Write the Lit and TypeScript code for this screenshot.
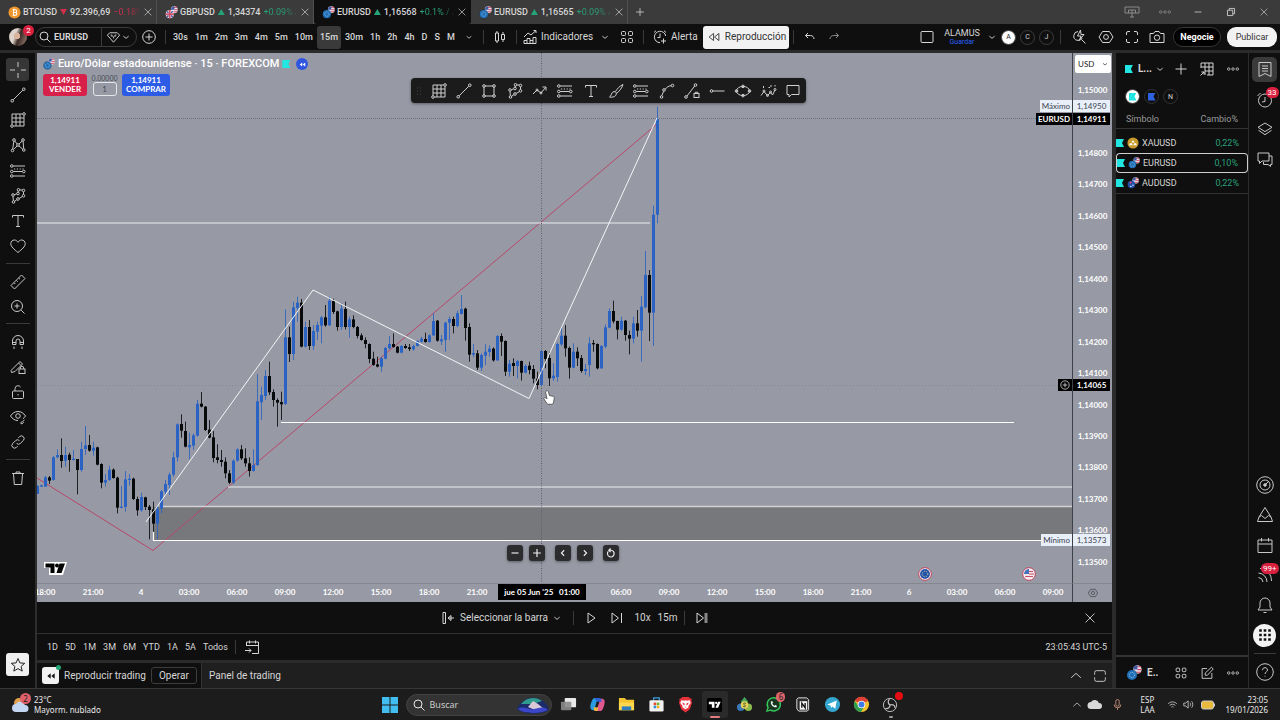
import { LitElement, html, css, svg, nothing } from "lit";
import { customElement } from "lit/decorators.js";
import { classMap } from "lit/directives/class-map.js";

/* ---------- icons, drawn on an 18px grid ---------- */
const dot = (x: number, y: number, r = 1.3) => svg`<circle cx=${x} cy=${y} r=${r} />`;

const icons: Record<string, unknown> = {
  cross: svg`<path d="M9 1v5M9 12v5M1 9h5M12 9h5M9 9h.1"/>`,
  trend: svg`${dot(3.2, 14.8)}${dot(14.8, 3.2)}<path d="M4.2 13.8 13.8 4.2"/>`,
  box: svg`<path d="M3 3h10.6M15 4.4V15H4.4M3 13.6V3M3 7h12M3 11h12M7 3v12M11 3v12"/>${dot(15, 3)}${dot(3, 15)}`,
  pattern: svg`${dot(3.5, 14.5)}${dot(5, 4)}${dot(9, 9)}${dot(14, 4)}${dot(14.8, 14)}<path d="M3.7 13.2 4.8 5.3M5.8 5l2.4 3M10 8l3.2-3M14.1 5.3l.6 7.4M4.5 13.6 8 10M10 10l3.8 3.2"/>`,
  forecast: svg`${dot(2.8, 4)}${dot(2.8, 9.5)}${dot(14.8, 9.5)}${dot(2.8, 14)}<path d="M4.2 4H16M4.2 9.5h9.2M4.2 14H16"/><path d="M5 7h11" stroke-dasharray="1.2 1.6"/>`,
  shapes: svg`${dot(4, 8)}${dot(9, 6.5)}${dot(14.5, 3.5)}${dot(9.5, 2.8)}${dot(14.5, 8.8)}${dot(9, 12)}${dot(4.5, 15)}<path d="M5.3 7.7l2.4-.8M9.200 5.200l.1-1.100M10.800 3h2.400M14.500 4.800v2.700M13.400 9.600 10.200 11.400M7.900 12.700l-2.300 1.500M4 9.300l.4 4.400"/>`,
  text: svg`<path d="M3.500 5.500V3.500h11v2M9 3.500v11M7 14.500h4"/>`,
  heart: svg`<path d="M9 15.500C5 12.300 1.800 9.600 1.800 6.700 1.800 4.500 3.400 3 5.300 3 6.900 3 8.200 3.900 9 5.300 9.800 3.900 11.100 3 12.700 3c1.900 0 3.500 1.500 3.500 3.700C16.200 9.600 13 12.300 9 15.500z"/>`,
  ruler: svg`<path d="M2 12.500 12.500 2 16 5.500 5.500 16zM5 9.700l1.300 1.300M7.300 7.400l1.300 1.300M9.700 5l1.300 1.300"/>`,
  zoom: svg`<circle cx="8" cy="8" r="5.500"/><path d="M12.200 12.200 15.500 15.500M8 5.500v5M5.500 8h5"/>`,
  magnet: svg`<path d="M3.500 11.500V8a5.500 5.500 0 0 1 11 0v3.500h-3.500V8a2 2 0 0 0-4 0v3.500zM3.500 9.500h3.500M11 9.500h3.500M5 13.500v2.500M13 13.500v2.500M7 14h.1M11 14h.1"/>`,
  pencilLock: svg`<path d="M2 12.500 11 3.500l2.500 2.500L6 13.500 2.500 14.500zM9.500 5 12 7.500"/><rect x="10" y="11" width="6" height="4.500"/><path d="M11.300 11v-1a1.700 1.700 0 0 1 3.400 0v1"/>`,
  lock: svg`<rect x="3.500" y="8" width="11" height="7.500" rx="1"/><path d="M6 8V5.500A3 3 0 0 1 11.600 4.200M9 11v1.500"/>`,
  eye: svg`<path d="M1.500 8C3.500 5 6 3.500 9 3.500s5.500 1.500 7.500 4.500c-.8 1.200-1.700 2.200-2.700 2.900M1.500 8c2 3 4.500 4.500 7.500 4.500"/><circle cx="9" cy="8" r="2.300"/><path d="M11 15.500c1-.3 1.300-2 2.700-2l1.800-1.500M12 15.800c1.500 0 2.500-.8 2.500-1.800"/>`,
  link: svg`<path d="M7.600 10.400a2.700 2.700 0 0 0 3.800 0l3.100-3.100a2.700 2.700 0 0 0-3.800-3.800L9.300 4.900M10.400 7.600a2.700 2.700 0 0 0-3.800 0l-3.100 3.100a2.700 2.700 0 0 0 3.800 3.800l1.400-1.400"/>`,
  trash: svg`<path d="M3 4.500h12M7 4.500V3h4v1.500M4.500 4.500l.8 11h7.400l.8-11"/>`,
  star: svg`<path d="M9 2.500l1.900 4.400 4.800.4-3.600 3.100 1.100 4.700L9 12.600l-4.200 2.500 1.100-4.700L2.300 7.300l4.800-.4z"/>`,
  search: svg`<circle cx="8" cy="8" r="4"/><path d="M11 11l3.500 3.500"/>`,
  gem: svg`<path d="M2.500 6.500 5 4h8L15.500 6.500 9 14zM6 6.500h1.500v2M12 6.500h-1.500v2M9 8v2"/>`,
  down: svg`<path d="M6 8 9 10.500 12 8"/>`,
  up: svg`<path d="M3.500 11 9 6 14.500 11"/>`,
  plusCircle: svg`<circle cx="9" cy="9" r="6.300"/><path d="M9 5.500v7M5.500 9h7"/>`,
  plus: svg`<path d="M9 4v10M4 9h10"/>`,
  plusBig: svg`<path d="M9 3.500v11M3.500 9h11"/>`,
  candles: svg`<path d="M6 3v2M6 13v2M4.500 5h3v8h-3zM12 4v2.500M12 11.500V14M10.500 6.500h3v5h-3z"/>`,
  indicators: svg`<path d="M3 15.500v-3h3v-2h3v2h3v-3h3v6zM6 12.500v3M9 12.500v3M12 12.500v3M3 9l4-4 3 2 5-4.500M12.500 2.500H15V5"/>`,
  four: svg`<rect x="3.500" y="3.500" width="4" height="4" rx="1"/><rect x="10.500" y="3.500" width="4" height="4" rx="1"/><rect x="3.500" y="10.500" width="4" height="4" rx="1"/><rect x="10.500" y="10.500" width="4" height="4" rx="1"/>`,
  alarm: svg`<path d="M14.700 8A5.700 5.700 0 1 0 9 14.700M9 5.500V9.500H6.500M3 4.500 5 2.700M15 4.500 13 2.700M12.500 10.500v5M10 13h5"/>`,
  rewind: svg`<path d="M8.500 5v8L3.500 9zM14.500 5v8L9.500 9z"/>`,
  undo: svg`<path d="M7 5 4.500 7.500 7 10M4.500 7.500h5c2 0 3.500 1.500 3.500 3.500"/>`,
  redo: svg`<path d="M11 5l2.500 2.500L11 10M13.500 7.500h-5C6.500 7.500 5 9 5 11"/>`,
  square: svg`<rect x="3" y="3.500" width="12" height="11" rx="1"/>`,
  bolt: svg`<path d="M8 3.500A4.500 4.500 0 1 0 12.300 10M11.500 11.500l4 4M10.500 2 7.500 8H11L9.500 12 14 6.500H11z"/>`,
  hex: svg`<path d="M5.500 3.500h7L16 9l-3.500 5.500h-7L2 9z"/><circle cx="9" cy="9" r="2.400"/>`,
  full: svg`<path d="M3.500 7V5a1.500 1.500 0 0 1 1.500-1.500h2M11 3.500h2A1.500 1.500 0 0 1 14.500 5v2M14.500 11v2a1.500 1.500 0 0 1-1.500 1.500h-2M7 14.500H5A1.500 1.500 0 0 1 3.500 13v-2"/>`,
  maximize: svg`<path d="M3 7.500V5a2 2 0 0 1 2-2h8a2 2 0 0 1 2 2v2.500M15 10.500V13a2 2 0 0 1-2 2H5a2 2 0 0 1-2-2v-2.500"/>`,
  camera: svg`<path d="M2 5.500h3.500L7 3.500h4l1.500 2H16v9H2z"/><circle cx="9" cy="9.700" r="2.700"/>`,
  zig: svg`<path d="M2 12l4-4 4 3 4.500-5.500M11.500 5h3.500v3.500"/>${dot(6, 8, 1)}${dot(10, 11, 1)}`,
  brush: svg`<path d="M2.500 15c2-.500 1.500-5 4.500-5.500 2.300 0 3 2.200 1.800 3.800C7.800 15 5 15.500 2.500 15zM8.500 9.500c1.500-2.500 4-5.500 7.500-7-1 3.500-3.500 6.500-6 8.500"/>`,
  rect: svg`<path d="M4.800 4h8.400M14 5v8.200M13.200 14H4.800M4 13.200V5"/>${dot(4, 4)}${dot(14, 4)}${dot(4, 14)}${dot(14, 14)}`,
  curve: svg`${dot(3.5, 15)}${dot(14.5, 3.5)}${dot(6, 8)}<path d="M3.800 13.700 5.600 9.300M7.200 7.300C8.500 5 11 4 13.200 3.600"/>`,
  lineBox: svg`${dot(3, 15)}${dot(12.5, 3)}<path d="M4 14 11.700 4"/><rect x="11" y="11.500" width="5" height="4"/><path d="M12.300 11.500v-1.300h2.400v1.300"/>`,
  hline: svg`${dot(3.5, 9)}<path d="M5 9h11.500"/>`,
  ellipse: svg`<ellipse cx="9" cy="9" rx="6.500" ry="4.600"/>${dot(2.5, 9)}${dot(15.5, 9)}${dot(9, 4.4)}${dot(9, 13.6)}`,
  elliott: svg`<path d="M2 13.500l3-4 3.500 4 3-3 2 2.500 2.500-5"/>${dot(5, 9, 1)}${dot(8.5, 13.5, 1)}${dot(11.5, 10, 1)}${dot(16, 7.5, 1)}<path d="M4.500 4v2M9.500 5.500h1.500M12 3v2M16 3v1.500"/>`,
  comment: svg`<path d="M3 3.500h12v9H7.500L5 15v-2.500H3z"/>`,
  grip: svg`<path stroke-linecap="round" d="M7 5h.1M11 5h.1M7 9h.1M11 9h.1M7 13h.1M11 13h.1"/>`,
  dots: svg`${dot(3.5, 9, 1.6)}${dot(9, 9, 1.6)}${dot(14.5, 9, 1.6)}`,
  table: svg`<path d="M3 8V3h12v12H9M3 7h12M7 3v12M11 3v12M7 11h8M2.500 15.500 6 12M3.500 12H6v2.500"/>`,
  list: svg`<path d="M3 2.500h12v14l-6-3-6 3zM6 6h6M6 8.500h6M6 11h6"/>`,
  clock: svg`<circle cx="9" cy="10.500" r="6.500"/><path d="M9 7V11.500l-3 .5M1.500 6 4.500 3"/>`,
  layers: svg`<path d="M9 3l7 4.300-7 4.300-7-4.300zM2.500 10.300 9 14.700l6.500-4.400"/>`,
  chat: svg`<path d="M2 3h11v8H6l-2.500 2.500V11H2zM13 6h3v8.500h-1.500v2L12 14.500H7.500V12"/>`,
  radar: svg`<circle cx="9" cy="9" r="8.300"/><circle cx="9" cy="9" r="5"/><circle cx="9" cy="9" r="1.300" fill="currentColor"/><path d="M9 9l4-4"/>`,
  pyramid: svg`<path d="M9 1.500 15 11 12.500 9.500 9 12.500 5.500 9.500 3 11zM3 11l-1.500 4.500h15L15 11"/>`,
  calendar: svg`<path d="M2 4h14v12.500H2zM2 8h14M5.500 2v3.500M12.500 2v3.500"/>`,
  feed: svg`<path d="M2.500 7a9 9 0 0 1 8.500 9M2.500 11.500a5 5 0 0 1 4.500 4.500M4 2.500C11 3 15.500 8 15.500 15M3 15.500h.1"/>`,
  bell: svg`<path d="M9 2a5 5 0 0 1 5 5v4l2 3H2l2-3V7a5 5 0 0 1 5-5zM7.500 16.500h3"/>`,
  apps: svg`<path stroke-width="2.600" d="M3.200 4.500h2.600M7.700 4.500h2.600M12.200 4.500h2.600M3.200 9h2.600M7.700 9h2.600M12.200 9h2.600M3.200 13.500h2.600M7.700 13.500h2.600M12.200 13.500h2.600"/>`,
  help: svg`<circle cx="9" cy="9" r="8.300"/><path d="M6.500 7.200C6.500 5.500 7.500 4.700 9 4.700s2.500 1 2.500 2.300C11.500 8.800 9 9 9 11M9 12.800v.8"/>`,
  selectBar: svg`<path d="M4 3.500h2.500v11H4zM15 9H9.500M12 6.500v5L9 9z"/>`,
  play: svg`<path d="M6 4v10l7-5z"/>`,
  step: svg`<path d="M4 4v10l6.500-5zM13.500 4v10"/>`,
  toEnd: svg`<path d="M4 4v10l6.500-5z"/><path stroke-width="3" opacity=".6" d="M13 4v10"/>`,
  close: svg`<path d="M4 4l10 10M14 4 4 14"/>`,
  goTo: svg`<path d="M3.500 8V4h12v11.500H9M3.500 7.500h12M6.500 2.500v3M12.500 2.500v3M2 12.500h6M6 10.500l2 2-2 2"/>`,
  edit: svg`<path d="M14.500 9v6h-11V4H9M7 11.500V9L14 2.500 16 4.500 9.500 11.500z"/>`,
  minus: svg`<path d="M4.500 9h9"/>`,
  left: svg`<path d="M10.500 5.500 7 9l3.500 3.500"/>`,
  right: svg`<path d="M7.500 5.500 11 9l-3.500 3.500"/>`,
  reset: svg`<path d="M5.500 7A4.300 4.300 0 1 0 9 5.500H6.500M8.500 3.200 6.200 5.500l2.300 2.300"/>`,
  monitor: svg`<path d="M2 4h14v6H2zM5.500 10V7h7v3M9 7v7M7 14h4"/>`,
  restore: svg`<path d="M5 7h6v6H5zM7 7V5h6v6h-2"/>`,
  mic: svg`<path d="M9 3a2 2 0 0 1 2 2v4a2 2 0 0 1-4 0V5a2 2 0 0 1 2-2zM5 9a4 4 0 0 0 8 0M9 13v2.500"/>`,
  wifi: svg`<path d="M3 8c3.500-3.500 8.500-3.500 12 0M5 10.300c2.500-2.300 5.500-2.300 8 0M7.500 12.500c1-.8 2-.8 3 0"/>`,
  speaker: svg`<path d="M2.500 7H5l3.500-3v10L5 11H2.500zM11 6.500c1.200 1.500 1.200 3.500 0 5M13.300 4.500c2.200 2.500 2.200 6.500 0 9"/>`,
};

const icon = (name: string, size = 18) =>
  html`<svg class="ic" width=${size} height=${size} viewBox="0 0 18 18" aria-hidden="true">${icons[name]}</svg>`;

/* ---------- instrument logos ---------- */
const usFlag = svg`<circle cx="10" cy="4" r="3.700" fill="#e9e4ec"/><path d="M9 1.500h4M10 4h3.700M9 6.300h4" stroke="#d0405a"/><path d="M6.500 3a3.700 3.700 0 0 1 3.500-2.700V4H6.500z" fill="#3b57a8"/>`;
const coins: Record<string, unknown> = {
  BTC: svg`<circle cx="7" cy="7" r="6.500" fill="#f0962c"/><path d="M5 4h3a1.400 1.400 0 0 1 0 2.900H5.500M8 6.900a1.500 1.500 0 0 1 0 3.100H5M6 4v6M6.500 3v1M6.500 10v1" stroke="#fff" fill="none" stroke-width="1.100"/>`,
  XAU: svg`<circle cx="7" cy="7" r="6.500" fill="#c99a2c"/><path d="M5.300 6.300l.8-2h1.800l.8 2zM2.500 9.600l.9-2.300h2.400l.8 2.300zM7.400 9.600l.8-2.300h2.400l.9 2.300z" fill="#fff"/>`,
  EUR: svg`${usFlag}<circle cx="5.200" cy="8.800" r="5" fill="#0f0f0f" opacity=".35"/><circle cx="5.200" cy="8.800" r="4.400" fill="#1f6fb8"/><circle cx="5.200" cy="8.800" r="2.300" fill="none" stroke="#a8cbe0" stroke-width=".8" stroke-dasharray="1 .8"/>`,
  GBP: svg`${usFlag}<circle cx="5.200" cy="8.800" r="4.400" fill="#e8c9d4"/><path d="M5.200 4.400v8.800M.8 8.800h8.800" stroke="#cf3551" stroke-width="1.300"/><path d="M2.200 5.800l1.500 1.500M8.200 5.800 6.700 7.300M2.200 11.800l1.500-1.500M8.200 11.800 6.700 10.300" stroke="#3455a5" stroke-width="1.400"/>`,
  AUD: svg`${usFlag}<circle cx="5.200" cy="8.800" r="4.400" fill="#2450a8"/><path d="M3 6.500h2.500M4.200 5.300v2.500" stroke="#e46"/><circle cx="7" cy="9.500" r=".8" fill="#fff"/><circle cx="4.500" cy="11" r=".8" fill="#fff"/>`,
};
const coin = (name: string, size = 13) =>
  html`<svg class="coin" width=${size} height=${size} viewBox="0 0 14 14" aria-hidden="true">${coins[name]}</svg>`;

/* ---------- chart series: side, body top, body bottom, high, low (thirds of a pixel) ---------- */
const series: { base: number; rows: string }[] = [
  {
    base: 370,
    rows: `b348 372 345 372,b346 350 344 350,b322 350 318 350,k322 332 318 342,b262 330 258 332,b255 262 238 265,k255 273 205 293,b255 272 230 290,k254 270 248 305,b266 270 240 272,k267 300 267 373,b237 300 215 305,b226 237 168 255,k225 242 195 245,b233 242 215 257,k232 284 230 286,k282 338 280 355,b330 338 312 350,b299 330 287 333,k299 324 295 326,k323 413 320 430,b410 413 348 415,b328 411 303 425,b326 330 312 347,k326 387 323 390,k387 421 380 437,b381 421 368 425,k382 411 380 420,k410 420 405 508,k418 461 395 485,b416 461 408 508,b364 416 360 430,b342 365 330 375,b314 345 308 375,b262 314 245 320,b163 262 160 275,k162 182 133 203,k183 230 155 232,b225 232 188 268,b196 227 190 240,b101 197 90 200,k101 110 66 112,k110 180 108 183,k179 203 150 205,k202 264 183 277,k262 270 223 280,k270 276 240 290,k275 310 262 325,k310 338 300 342,b272 338 268 342,b238 272 235 275,k238 265 225 270,k265 280 235 290,k280 303 262 320,b285 303 238 305,b94 285 12 288,b75 97 50 150,b18 78 0 90,k18 67 -25 75,k66 90 58 110,k90 98 85 170,k96 103 65 150`,
  },
  {
    base: 270,
    rows: `b202 402 118 405,k202 252 170 276,b112 252 95 270,b98 114 80 155,k98 230 87 232,b171 230 155 233,k171 228 150 240,b183 228 165 240,b165 185 155 210,b142 167 138 220,k142 166 105 170,b92 166 80 168,k93 126 86 132,k124 171 122 182,b116 171 100 180,k117 171 95 178,b148 171 140 203,k148 171 136 175,k171 198 168 205,k196 210 190 212,k210 222 202 235,k222 267 220 280,k266 285 245 287,k283 290 260 292,b265 290 260 305,b234 266 230 268,b222 235 198 238,k222 231 190 233,k230 248 228 250,b228 248 225 250,k228 234 222 236,k232 237 222 243,b228 238 224 242,b213 228 210 230,b206 215 200 217,k207 216 188 218,b196 216 193 218,b153 196 130 198,k152 212 150 215,b208 214 195 225,b158 210 155 245,b147 158 140 210,k147 168 140 190,b130 168 122 172,b117 132 75 133,k116 174 113 212,k171 254 160 275,b249 254 222 262,k250 293 240 300,b255 293 250 303,b245 257 222 285,b236 246 226 260,k236 271 232 275,b198 271 195 273,k198 215 190 258,k213 305 211 318,b281 305 270 320,k279 288 265 318,b273 288 270 325,k273 308 272 332,b288 308 283 310`,
  },
  {
    base: 90,
    rows: `k827 840 815 853,k837 866 825 880,k866 885 845 898,b783 885 780 888,k783 807 780 835,k804 865 785 888,b857 865 820 873,b762 861 758 875,b737 763 712 768,k737 775 705 800,k774 833 770 866,b785 833 760 835,k785 805 772 828,k804 843 795 848,b837 843 822 855,b760 825 742 860,k759 763 750 785,k762 835 760 838,b768 835 765 837,b712 770 703 775,b663 713 655 715,k663 694 632 700,k693 719 692 748,b692 719 680 722,k692 735 690 752,k735 746 722 793,b700 746 680 760,k700 722 660 740,b650 722 618 815,b555 652 483 655,k555 668 540 753,b374 668 347 768,b87 374 50 400`,
  },
];
const HEADER = 53;
const candles = series
  .flatMap((s) =>
    s.rows.split(",").map((row) => {
      const [t, b, h, l] = row.slice(1).split(" ").map((v) => +v / 3 + s.base - HEADER);
      return { up: row[0] === "b", t, b, h, l };
    }),
  )
  .map((c, i) => ({ ...c, x: i * 4 }));

const prices = ["1,15000", "", "1,14800", "1,14700", "1,14600", "1,14500", "1,14400", "1,14300", "1,14200", "1,14100", "1,14000", "1,13900", "1,13800", "1,13700", "1,13600", "1,13500"];
const times = ["18:00", "21:00", "4", "03:00", "06:00", "09:00", "12:00", "15:00", "18:00", "21:00", "", "", "06:00", "09:00", "12:00", "15:00", "18:00", "21:00", "6", "03:00", "06:00", "09:00"];
const intervals = ["30s", "1m", "2m", "3m", "4m", "5m", "10m", "15m", "30m", "1h", "2h", "4h", "D", "S", "M"];

const tabs = [
  { coin: "BTC", name: "BTCUSD", up: false, price: "92.396,69", change: "−0.18%", active: false },
  { coin: "GBP", name: "GBPUSD", up: true, price: "1,34374", change: "+0.09% /", active: false },
  { coin: "EUR", name: "EURUSD", up: true, price: "1,16568", change: "+0.1% / A", active: true },
  { coin: "EUR", name: "EURUSD", up: true, price: "1,16565", change: "+0.09% /", active: false },
];

const apps: { name: string; art: unknown; on?: boolean; badge?: string }[] = [
  { name: "Vista de tareas", art: svg`<rect x="5" y="2" width="12" height="10" rx="1" fill="#e8e8e8"/><rect x="1" y="6" width="11" height="9" rx="1" fill="#8b8b8b" opacity=".9"/>` },
  { name: "Copilot", art: svg`<path d="M6 2h5l-3.500 13H4.500C1 15 1 11 2 8S4 2 6 2z" fill="#2a9be0"/><path d="M12 3h2c3 0 3 4 2 7s-2 6-4 6H7z" fill="#e0588e"/><path d="M6 2h5c2 0 2 2 2.500 4H8z" fill="#2f62d8"/><path d="M5 12h5l-1 4H7c-2 0-2-2-2-4z" fill="#f2b63c"/><path d="M8 6h3l-2 6H6.500z" fill="#1c1c1c"/>` },
  { name: "Explorador", art: svg`<path d="M1 2h6l2 2h8v11H1z" fill="#f4c430"/><path d="M1 7h16v8H1z" fill="#ffd84f"/><path d="M4 11h10v4H4z" fill="#2f7fc0"/>` },
  { name: "Tienda", art: svg`<path d="M6 5V2h6v3" fill="none" stroke="#3b9ee0" stroke-width="1.300"/><rect x="1.500" y="4.500" width="15" height="12" rx="1.500" fill="#f1f1f1"/><path d="M6 7h2.700v2.700H6z" fill="#e5472d"/><path d="M9.300 7H12v2.700H9.300z" fill="#70b52c"/><path d="M6 10.300h2.700V13H6z" fill="#2a93dd"/><path d="M9.300 10.300H12V13H9.300z" fill="#f4b51e"/>` },
  { name: "Brave", art: svg`<path d="M5.500 1h7l1 1.500 2 .5-.2 2.500.7 1.500-2.500 7L9 17.500 4.500 14 2 7l.7-1.500L2.500 3l2-.5z" fill="#e8323c"/><path d="M4.500 4.500l3 .5L9 4.500l1.500.5 3-.5 1 3-2.500 3 .3 1.500L9 14l-3.300-2L6 10.500l-2.500-3z" fill="#fff"/><path d="M5.500 7l2.500 1v2L6.500 9zM12.500 7 10 8v2l1.500-1zM8 11.500h2L9 12.500z" fill="#e8323c"/>` },
  { name: "TradingView", on: true, art: svg`<rect x="1" y="2" width="16" height="15" rx="2" fill="#000"/><path d="M3 6h6v6.500H6.200V8.700H3zM12.800 6H15.500l-2.700 6.500H10z" fill="#fff"/><circle cx="10.800" cy="7.300" r="1.200" fill="#fff"/>` },
  { name: "Finanzas", art: svg`<path d="M9 1l4 5-4 4-4-4z" fill="#4aa85c"/><circle cx="5" cy="12" r="4" fill="#3a77b8"/><circle cx="13" cy="12" r="4" fill="#8dba4d"/><circle cx="9" cy="9.500" r="4" fill="#e7cf58"/><path d="M10.500 8c-2.500-1.500-3.500.8-1.500 1.500s1 2.800-1.500 1.500" stroke="#3d5e30" fill="none"/>` },
  { name: "WhatsApp", badge: "6", art: svg`<path d="M2 16l1.200-3.700A7 7 0 1 1 6 15z" fill="#17351f" stroke="#35c759" stroke-width="1.500"/><path d="M6.300 5.500c-1 3.500 3 7.500 6 6.300l.3-1.600-1.700-.8-1 .8c-1-.4-1.800-1.200-2.200-2.200l.8-.8-.7-1.700z" fill="#e8f5ea"/>` },
  { name: "Notion", art: svg`<path d="M3 3.500 4.500 2h9l2 2v10.500L14 16H5l-2-2.500z" fill="#2b2b2b" stroke="#e8e8e8"/><path d="M6 5.500h8v9H6z" fill="#f4f4f4"/><path d="M8.300 12.500v-5l3.500 5v-5" stroke="#111" stroke-width="1.400" fill="none"/>` },
  { name: "Telegram", art: svg`<circle cx="9" cy="9" r="8" fill="#35a6cf"/><path d="M3.500 9 13.500 4.800 12 13.500 8.800 11.200 7.300 12.700 7 10z" fill="#fff"/>` },
  { name: "Chrome", art: svg`<circle cx="9" cy="9" r="8" fill="#f5c22e"/><path d="M9 9 2 5a8 8 0 0 1 14 0z" fill="#de4236"/><path d="M1.900 5.200A8 8 0 0 0 8.500 17L12 11 5.500 10z" fill="#2f9e4e"/><circle cx="9" cy="9" r="4" fill="#fff"/><circle cx="9" cy="9" r="3.100" fill="#3f7be6"/>` },
  { name: "OBS", badge: " ", art: svg`<circle cx="8.500" cy="9.500" r="7" fill="#1c1c1c" stroke="#c4c4c4"/><path d="M8.500 9.500C6 8 6 5 8 3.500M8.500 9.500c2.700-1.300 5 .5 5.500 3M8.500 9.500c0 3-2.500 4.500-5 3.500" stroke="#c4c4c4" fill="none" stroke-width="1.300"/>` },
];

@customElement("app-root")
export class AppRoot extends LitElement {
  static styles = css`
    :host { display: flex; flex-direction: column; min-height: 100vh; overflow: hidden; background: #0f0f0f; color: #d6d6d6; font: 400 10px/12px Roboto, "Noto Sans", sans-serif; }
    * { box-sizing: border-box; }
    button, input, select { font: inherit; color: inherit; border: 0; background: none; padding: 0; margin: 0; }
    button { display: flex; align-items: center; justify-content: center; white-space: nowrap; }
    b { font-weight: 500; }
    .ic { fill: none; stroke: currentColor; flex: none; display: block; }
    .coin { flex: none; display: block; }
    .sep { width: 1px; height: 14px; background: #3a3a3a; margin: 0 4px; flex: none; }
    .grow { flex: 1; }
    .w14 { width: 14px; }
    .w20 { width: 20px; }
    .w24 { width: 24px; }
    .w26 { width: 26px; }
    .w28 { width: 28px; }

    .tabs { display: flex; height: 24px; background: #3b3b3b; align-items: stretch; }
    .tab { width: 157px; display: flex; align-items: center; gap: 3px; padding: 0 2px 0 8px; border-right: 1px solid #505050; white-space: nowrap; font-size: 9px; }
    .tab.active { background: #0f0f0f; border-color: #0f0f0f; border-radius: 0 0 3px 3px; }
    .tab .coin { margin-right: -1px; }
    .tab .change { flex: 1; min-width: 0; color: #2a9d78; mask-image: linear-gradient(90deg, #000 60%, #0004); }
    .tab .change.red { color: #c22f4b; }
    .tri { width: 7px; height: 6px; flex: none; background: #24a37b; clip-path: polygon(50% 0, 100% 100%, 0 100%); }
    .tri.red { background: #d0304c; clip-path: polygon(0 0, 100% 0, 50% 100%); }
    .win { width: 33px; color: #cfcfcf; }
    .dim { color: #8b8b8b; }

    .top { display: flex; align-items: center; height: 29px; border-bottom: 3px solid #2b2b2b; }
    .avatar { width: 35px; position: relative; display: flex; justify-content: center; }
    .face { width: 18px; height: 18px; border-radius: 50%; background: radial-gradient(circle at 45% 45%, #d9b39b 0 22%, transparent 24%), linear-gradient(110deg, #dcd3ca 35%, #3b2a25 55%, #a08577); }
    .badge { position: absolute; background: #d9203f; color: #fff; border-radius: 6px; font-size: 8px; line-height: 11px; min-width: 11px; text-align: center; }
    .avatar .badge { right: 1px; top: -3px; }
    .pill { width: 102px; height: 20px; border: 1px solid #3c3c3c; border-radius: 10px; display: flex; align-items: center; }
    .pill .sym { width: 66px; height: 18px; border-right: 1px solid #3c3c3c; justify-content: flex-start; font-size: 9px; font-weight: 700; }
    .pill .cmp { flex: 1; }
    .pill .cmp .ic + .ic { margin-left: -4px; }
    .intervals { width: 309px; display: flex; justify-content: space-between; align-items: center; font-size: 9px; font-weight: 500; }
    .intervals button { height: 23px; padding: 0 3px; border-radius: 3px; }
    .intervals button.on { background: #3a3a3a; }
    .ind { width: 74px; gap: 2px; justify-content: flex-start; }
    .alert { width: 53px; gap: 2px; justify-content: flex-start; padding-left: 3px; }
    .replay { width: 86px; height: 23px; margin: 0 0 0 2px; background: #f2f2f2; color: #333; border-radius: 3px; gap: 3px; }
    .layout { width: 46px; flex-direction: column; font-size: 9px; line-height: 10px; }
    .layout span { color: #2962ff; font-size: 7px; line-height: 8px; }
    .ring { width: 15px; height: 15px; border-radius: 50%; border: 1px solid #3c3c3c; font-size: 7px; margin: 0 2px; }
    .ring.on { background: #fff; color: #222; }
    .deal { width: 48px; height: 20px; border-radius: 10px; border: 1px solid #363636; background: #000; color: #fff; font-weight: 700; font-size: 9px; margin: 0 6px 0 4px; }
    .publish { width: 50px; height: 20px; border-radius: 9px; background: #f2f2f2; color: #333; font-size: 9px; margin-right: 3px; }

    .main { flex: 1; display: flex; min-height: 0; }
    .tools { width: 37px; border-right: 2px solid #2e2e2e; padding-top: 4px; display: flex; flex-direction: column; color: #c8c8c8; }
    .group { display: grid; grid-auto-rows: 1fr; justify-items: center; align-items: center; }
    .group.a { height: 202px; } .group.b { height: 50px; } .group.c { height: 126px; } .group.d { height: 25px; }
    .group button { width: 23px; height: 23px; border-radius: 3px; }
    .group button.on { background: #363636; }
    .tools hr { width: 24px; height: 1px; border: 0; background: #3a3a3a; margin: 4px auto 5px; }
    .fav { width: 23px; height: 23px; border-radius: 3px; background: #f0f0f0; color: #222; margin: auto 6px 12px; }

    .center { flex: 1; min-width: 0; display: flex; flex-direction: column; border-right: 4px solid #2b2b2b; }
    .chart { display: grid; grid-template-columns: 1fr 40px; grid-template-rows: 530px 19px; background: #979aa4; color: #fff; font: 700 8px/12px Lato, "Noto Sans", sans-serif; }
    .pane { position: relative; overflow: hidden; min-width: 0; }
    .plot { position: absolute; inset: 0; width: 100%; height: 100%; }
    .legend { position: relative; display: flex; align-items: center; gap: 3px; padding: 4px 6px 0; font: 500 11px/14px Roboto, "Noto Sans", sans-serif; }
    .flag { width: 8px; height: 8px; background: #22e6e2; clip-path: polygon(0 0, 100% 0, 75% 50%, 100% 100%, 0 100%); margin: 0 5px 0 4px; }
    .legend .flag { margin: 0 3px 0 0; }
    .back { width: 12px; height: 12px; border-radius: 50%; background: #2f55e0; }
    .back .ic, .rt .ic { fill: currentColor; stroke: none; }
    .trade { position: relative; display: flex; align-items: flex-end; gap: 5px; padding: 3px 6px; }
    .trade button { flex-direction: column; width: 44px; height: 22px; border-radius: 3px; line-height: 9px; background: #d8214a; color: #fff; }
    .trade button.buy { width: 48px; background: #2c5be6; }
    .spread { display: flex; flex-direction: column; align-items: center; width: 25px; color: #484b54; font-size: 7px; line-height: 8px; font-weight: 400; }
    .spread input { width: 24px; height: 14px; border: 1px solid #e4e5e8; border-radius: 3px; text-align: center; font-size: 8px; }
    .drawbar { position: absolute; left: 374px; top: 25px; width: 395px; height: 25px; border-radius: 4px; background: #1b1b1b; color: #d0d0d0; box-shadow: 0 1px 3px #0006; display: grid; grid-template-columns: 15px repeat(15, 1fr); justify-items: center; align-items: center; }
    .drawbar .grip { color: #555; }
    .nav { position: absolute; left: 0; right: 0; bottom: 22px; padding-left: 16px; display: flex; gap: 6px; justify-content: center; }
    .nav button { width: 16px; height: 16px; border-radius: 3px; background: #2c2c2e; color: #eee; box-shadow: 0 1px 3px #0006; }
    .nav .ic { stroke-width: 1.500; }
    .nav .gap { margin-right: 4px; }
    .axis { position: relative; border-left: 1px solid #3f4148; }
    .scale { position: absolute; top: 31px; left: 0; right: 0; height: 484px; display: flex; flex-direction: column; justify-content: space-between; text-align: center; }
    .scale span { height: 12px; }
    .cur { position: absolute; z-index: 1; top: 2px; left: 2px; width: 36px; }
    .cur select { appearance: none; width: 36px; height: 18px; background: #fff; color: #222; border-radius: 2px; padding-left: 3px; font-weight: 400; }
    .cur .ic { position: absolute; right: 0; top: 3px; color: #222; }
    .mark { position: absolute; right: 2px; height: 12px; display: flex; }
    .mark span { background: #e9eff9; color: #3b4250; font-weight: 400; padding: 0 2px; }
    .mark span + span { width: 38px; text-align: center; padding: 0; border-left: 1px solid #3f4148; }
    .mark.dark span { background: #000; color: #fff; font-weight: 700; }
    .mark.cursor span:first-child { padding: 0 1px; }
    .max { top: 47px; } .now { top: 60px; } .cursor { top: 326px; } .min { top: 481px; }
    .time { position: relative; border-top: 1px solid #85878f; overflow: hidden; }
    .ticks { display: grid; grid-template-columns: repeat(22, 48px); margin-left: -16px; text-align: center; line-height: 17px; }
    .stamp { position: absolute; left: 461px; top: 0; width: 88px; height: 16px; background: #000; text-align: center; line-height: 17px; white-space: pre; }
    .corner { border-left: 1px solid #3f4148; border-top: 1px solid #85878f; color: #3a3c42; }

    .replaybar { height: 32px; display: flex; align-items: center; border-bottom: 1px solid #303030; padding: 0 14px 0 402px; }
    .replaybar .select { gap: 3px; width: 106px; justify-content: flex-start; }
    .replaybar .steps { display: flex; }
    .replaybar .speed { width: 25px; }
    .ranges { height: 29px; display: flex; align-items: center; padding: 0 5px 0 10px; border-bottom: 3px solid #2b2b2b; font-size: 9px; }
    .ranges .list { width: 181px; display: flex; justify-content: space-between; margin-right: 3px; }
    .panel { height: 25px; display: flex; align-items: center; background: #1f1f1f; }
    .rt { width: 165px; height: 25px; background: #0f0f0f; border-right: 1px solid #333; display: flex; align-items: center; padding-left: 5px; gap: 5px; white-space: nowrap; }
    .rt .logo { width: 17px; height: 17px; border-radius: 3px; background: #f2f2f2; color: #111; position: relative; display: flex; align-items: center; justify-content: center; }
    .rt .logo i { position: absolute; right: -2px; top: -2px; width: 5px; height: 5px; border-radius: 50%; background: #23a576; }
    .rt .operate { border: 1px solid #3c3c3c; border-radius: 3px; width: 46px; height: 17px; }
    .panel .trading { margin-left: 7px; }

    .watch { width: 133px; display: flex; flex-direction: column; border-right: 1px solid #2c2c2c; }
    .whead { display: flex; align-items: center; height: 32px; padding-left: 5px; }
    .whead .name { width: 47px; justify-content: flex-start; font-weight: 700; }
    .flags { display: flex; gap: 4px; padding: 4px 9px; }
    .flags button { width: 15px; height: 15px; border: 1px solid #333; border-radius: 50%; font-size: 7px; }
    .flags .flag { margin: 0; }
    .flags .blue { background: #2f62e0; }
    .flags .on { background: #fff; }
    table { width: 100%; border-collapse: separate; border-spacing: 0; margin-top: 2px; border-bottom: 1px solid #333; font-size: 9px; }
    th { font-weight: 400; color: #9a9a9a; text-align: left; height: 19px; padding: 0 0 0 10px; border-bottom: 1px solid #333; }
    th + th { text-align: right; padding: 0 10px 0 0; }
    td { height: 20px; padding: 0; }
    tbody tr:nth-child(1) td { height: 24px; padding-top: 4px; }
    td + td { text-align: right; padding-right: 9px; color: #2aa079; }
    .s { display: flex; align-items: center; gap: 3px; }
    .s .flag { margin: 0; }
    .sel td { border: 1px solid #cfcfcf; border-width: 1px 0; }
    .sel td:first-child { border-left-width: 1px; border-radius: 4px 0 0 4px; }
    .sel td:last-child { border-right-width: 1px; border-radius: 0 4px 4px 0; }
    .wfoot { margin-top: auto; height: 33px; border-top: 2px solid #333; display: flex; align-items: center; padding-left: 10px; }
    .wfoot .name { width: 42px; gap: 5px; justify-content: flex-start; font-weight: 700; }

    .rail { width: 31px; display: flex; flex-direction: column; align-items: center; padding: 1px 0; color: #c8c8c8; }
    .rail button { height: 30px; width: 30px; position: relative; }
    .rail .in { width: 25px; height: 25px; border-radius: 5px; display: flex; align-items: center; justify-content: center; }
    .rail .in.on { background: #3a3a3a; }
    .rail .in.white { width: 23px; height: 23px; border-radius: 50%; background: #f3f3f3; color: #111; }
    .rail .badge { right: 1px; top: 3px; padding: 0 2px; }
    .rail hr { width: 22px; height: 1px; border: 0; background: #3a3a3a; margin: 3px 0; }

    .taskbar { height: 32px; border-top: 1px solid #383838; background: #1c1c1c; color: #e8e8e8; display: grid; grid-template-columns: 1fr auto 1fr; align-items: center; font: 400 8px/10px "Noto Sans", "Open Sans", sans-serif; }
    .weather { display: flex; align-items: center; gap: 4px; padding-left: 11px; position: relative; }
    .weather .badge { left: 20px; top: -2px; background: #e0606a; color: #222; }
    .mid { display: flex; align-items: center; }
    .start { width: 31px; }
    .find { width: 146px; height: 22px; border-radius: 11px; background: #333; border: 1px solid #424242; display: flex; align-items: center; padding: 0 1px 0 3px; margin-right: 2px; }
    .find input { flex: 1; min-width: 0; font-size: 9px; outline: 0; margin-left: 2px; }
    .find input::placeholder { color: #ccc; opacity: 1; }
    .apps { width: 352px; display: grid; grid-template-columns: repeat(12, 1fr); justify-items: center; }
    .apps button { width: 26px; height: 27px; position: relative; border-radius: 3px; }
    .apps .on { background: #2a2a2a; }
    .apps .on::after { content: ""; position: absolute; bottom: 0; width: 10px; height: 2px; border-radius: 1px; background: #e27c80; }
    .apps .run::after { content: ""; position: absolute; bottom: 0; width: 4px; height: 2px; border-radius: 1px; background: #9a9a9a; }
    .apps .badge { right: 1px; top: 1px; min-width: 9px; height: 10px; line-height: 10px; background: #e0646a; color: #222; }
    .apps .badge.rec { background: #e40d12; min-width: 8px; height: 8px; }
    .tray { display: flex; align-items: center; justify-content: flex-end; padding-right: 12px; gap: 3px; }
    .tray .lang { text-align: center; width: 22px; margin: 0 5px 0 8px; }
    .tray .date { text-align: right; margin-left: 6px; }
    .tray .mic { color: #d69a84; margin-left: 3px; }
    .tray .battery { margin-left: 3px; }
  `;

  private btn(name: string, label = name, cls = "w24", size = 18) {
    return html`<button class=${cls} aria-label=${label}>${icon(name, size)}</button>`;
  }

  private tabBar() {
    return html`<nav class="tabs">
      ${tabs.map(
        (t) => html`<div class=${classMap({ tab: true, active: t.active })}>
          ${coin(t.coin)}<b>${t.name}</b><span class=${classMap({ tri: true, red: !t.up })}></span><b>${t.price}</b>
          <span class=${classMap({ change: true, red: !t.up })}>${t.change}</span>${this.btn("close", "Cerrar", "", 12)}
        </div>`,
      )}
      ${this.btn("plus", "Nueva pestaña", "w24", 14)}<span class="grow"></span>
      <button class="win dim" aria-label="Pantallas">${icon("monitor")}</button>
      <button class="win dim" aria-label="Más">${icon("dots", 14)}</button>
      ${this.btn("minus", "Minimizar", "win", 14)}${this.btn("restore", "Restaurar", "win", 16)}${this.btn("close", "Cerrar", "win", 12)}
    </nav>`;
  }

  private topBar() {
    return html`<header class="top">
      <div class="avatar"><span class="face"></span><span class="badge">2</span></div>
      <div class="pill">
        <button class="sym">${icon("search")}EURUSD</button>
        <button class="cmp" aria-label="Tipo">${icon("gem", 17)}${icon("down", 16)}</button>
      </div>
      ${this.btn("plusCircle", "Comparar")}<span class="sep"></span>
      <div class="intervals">
        ${intervals.map((i) => html`<button class=${i === "15m" ? "on" : ""}>${i}</button>`)}
        <button aria-label="Más intervalos">${icon("down", 14)}</button>
      </div>
      <span class="sep"></span>${this.btn("candles", "Velas")}<span class="sep"></span>
      <button class="ind">${icon("indicators")}Indicadores</button>${this.btn("down", "Plantillas", "w20", 16)}
      ${this.btn("four", "Diseños", "w24")}<span class="sep"></span>
      <button class="alert">${icon("alarm")}Alerta</button>
      <button class="replay">${icon("rewind", 16)}Reproducción</button><span class="sep"></span>
      ${this.btn("undo", "Deshacer")}<span class="dim">${this.btn("redo", "Rehacer")}</span>
      <span class="grow"></span>
      ${this.btn("square", "Diseño")}
      <button class="layout">ALAMUS<span>Guardar</span></button>${this.btn("down", "Abrir", "w14", 16)}
      <button class="ring on">A</button><button class="ring">C</button><button class="ring">J</button>
      <span class="sep"></span>
      ${this.btn("bolt", "Búsqueda rápida", "w28")}${this.btn("hex", "Ajustes", "w26")}${this.btn("full", "Pantalla completa", "w26")}${this.btn("camera", "Instantánea")}
      <button class="deal">Negocie</button><button class="publish">Publicar</button>
    </header>`;
  }

  private tools() {
    const g = (cls: string, names: string[]) =>
      html`<div class="group ${cls}">${names.map((n) => this.btn(n, n, n === "cross" ? "on" : ""))}</div>`;
    return html`<aside class="tools">
      ${g("a", ["cross", "trend", "box", "pattern", "forecast", "shapes", "text", "heart"])}<hr />
      ${g("b", ["ruler", "zoom"])}<hr />
      ${g("c", ["magnet", "pencilLock", "lock", "eye", "link"])}<hr />
      ${g("d", ["trash"])}
      ${this.btn("star", "Favoritos", "fav")}
    </aside>`;
  }

  private plot() {
    return html`<svg class="plot" aria-label="Gráfico EURUSD">
      <path d="M0 65.500H2000" stroke="#6d7079" stroke-dasharray="1 1" />
      <path d="M0 332.500H2000" stroke="#868993" stroke-dasharray="1 2" />
      <rect x="117" y="454" width="100%" height="33" fill="#77787b" />
      <path d="M0 425 116 497.500 620 71" fill="none" stroke="#b8476a" stroke-width="1" />
      <path d="M0 170H613M191 434H2000M125 453.500H2000" stroke="#cfd1d6" stroke-width="1.600" />
      ${candles.map(
        (c) => svg`<g fill=${c.up ? "#2a63c4" : "#08090b"}>
          <rect x=${c.x} y=${c.h} width="1" height=${c.l - c.h} opacity=".85"/>
          <rect x=${c.x - 1} y=${c.t} width="3" height=${Math.max(1.3, c.b - c.t)}/></g>`,
      )}
      <path d="M244 369.500H977M116.500 479V487.500H2000" fill="none" stroke="#fff" stroke-width="1.200" />
      <path d="M109 469 276 237 492 345.500 620 65" fill="none" stroke="#f4f5f7" stroke-width="1" />
      <path d="M504.500 0V530" stroke="#5c5f68" stroke-dasharray="1 1.500" />
      <g transform="translate(7 508)"><path d="M0 1h23l-4 13H5V7H0z" fill="#fff"/><path d="M1.500 2.500h9v9.500H6.500V6.500h-5zM15.500 2.500H21L17.500 12h-5z" fill="#000"/><circle cx="13" cy="4.500" r="2" fill="#000"/></g>
      <g transform="translate(888 521)"><circle r="6.300" fill="#fff" stroke="#c03a55"/><circle r="5" fill="#2653a8"/><circle r="2.800" fill="none" stroke="#cfd8a0" stroke-dasharray="1 1"/></g>
      <g transform="translate(992 521)"><circle r="6.300" fill="#fff" stroke="#c03a55"/><circle r="5" fill="#f4e6ea"/><path d="M0-2.500h4M0 0h5M-4 2.500h8" stroke="#c8506a"/><path d="M-5 0A5 5 0 0 1 0-5V0z" fill="#4273b8"/></g>
      <path d="M509.500 338c1-.5 1.800 0 2 1l.8 3.500 3.700.8c1 .3 1.300 1 1.200 2l-.7 4.200c-.4 1.200-1.200 1.800-2.500 1.800h-2c-1 0-1.800-.5-2.400-1.300L507 346c-.5-1 .5-1.800 1.500-1.200l1.500 1-1.300-6.300c-.1-.7.200-1.300.8-1.500z" fill="#fff" stroke="#333" stroke-width=".7"/>
    </svg>`;
  }

  private chart() {
    const draw = ["box", "trend", "rect", "shapes", "zig", "forecast", "text", "brush", "forecast", "curve", "lineBox", "hline", "ellipse", "elliott", "comment"];
    return html`<section class="chart">
      <div class="pane">
        ${this.plot()}
        <div class="legend">${coin("EUR", 12)}<span>Euro/Dólar estadounidense · 15 · FOREXCOM</span><span class="flag"></span><button class="back" aria-label="Reproducción">${icon("rewind", 9)}</button></div>
        <div class="trade">
          <button>1,14911<span>VENDER</span></button>
          <label class="spread">0.00000<input value="1" aria-label="Cantidad" /></label>
          <button class="buy">1,14911<span>COMPRAR</span></button>
        </div>
        <div class="drawbar"><span class="grip">${icon("grip", 14)}</span>${draw.map((d) => this.btn(d))}</div>
        <div class="nav">
          ${this.btn("minus", "Alejar", "", 14)}${this.btn("plus", "Acercar", "gap", 14)}${this.btn("left", "Atrás", "", 14)}${this.btn("right", "Adelante", "gap", 14)}${this.btn("reset", "Restablecer", "", 14)}
        </div>
      </div>
      <div class="axis">
        <label class="cur"><select aria-label="Moneda"><option>USD</option></select>${icon("down", 12)}</label>
        <div class="scale">${prices.map((p) => html`<span>${p}</span>`)}</div>
        <div class="mark max"><span>Máximo</span><span>1,14950</span></div>
        <div class="mark dark now"><span>EURUSD</span><span>1,14911</span></div>
        <div class="mark dark cursor"><span>${icon("plusCircle", 12)}</span><span>1,14065</span></div>
        <div class="mark min"><span>Mínimo</span><span>1,13573</span></div>
      </div>
      <div class="time"><div class="ticks">${times.map((t) => html`<span>${t}</span>`)}</div><div class="stamp">jue 05 Jun '25   01:00</div></div>
      <button class="corner" aria-label="Ajustes de escala">${icon("hex", 12)}</button>
    </section>`;
  }

  private below() {
    return html`<div class="replaybar">
        <button class="select">${icon("selectBar")}Seleccionar la barra</button>${this.btn("down", "Opciones", "w24", 16)}
        <span class="sep"></span>
        <div class="steps">${this.btn("play", "Reproducir", "w26")}${this.btn("step", "Avanzar", "w26")}<button class="speed">10x</button><button class="speed">15m</button></div>
        <span class="sep"></span>${this.btn("toEnd", "Ir al final", "w26")}
        <span class="grow"></span>${this.btn("close", "Cerrar", "", 16)}
      </div>
      <div class="ranges">
        <div class="list">${["1D", "5D", "1M", "3M", "6M", "YTD", "1A", "5A", "Todos"].map((r) => html`<button>${r}</button>`)}</div>
        <span class="sep"></span>${this.btn("goTo", "Ir a")}<span class="grow"></span><span>23:05:43 UTC-5</span>
      </div>
      <div class="panel">
        <div class="rt"><span class="logo">${icon("rewind", 12)}<i></i></span>Reproducir trading<button class="operate">Operar</button></div>
        <span class="trading">Panel de trading</span><span class="grow"></span>${this.btn("up", "Desplegar", "w24", 16)}${this.btn("maximize", "Maximizar", "w24", 16)}
      </div>`;
  }

  private watch() {
    const rows = [["XAU", "XAUUSD", "0,22%"], ["EUR", "EURUSD", "0,10%"], ["AUD", "AUDUSD", "0,22%"]];
    return html`<aside class="watch">
      <div class="whead"><button class="name"><span class="flag"></span>L...${icon("down", 16)}</button>${this.btn("plusBig", "Añadir", "w26")}${this.btn("table", "Tabla", "w26")}${this.btn("dots", "Más", "w26", 14)}</div>
      <div class="flags"><button class="on" aria-label="Lista cian"><span class="flag"></span></button><button aria-label="Lista azul"><span class="flag blue"></span></button><button>N</button></div>
      <table>
        <thead><tr><th>Símbolo</th><th>Cambio%</th></tr></thead>
        <tbody>
          ${rows.map(([c, n, p]) => html`<tr class=${n === "EURUSD" ? "sel" : ""}><td><span class="s"><span class="flag"></span>${coin(c, 12)}${n}</span></td><td>${p}</td></tr>`)}
        </tbody>
      </table>
      <div class="wfoot"><button class="name">${coin("EUR", 16)}E..</button>${this.btn("four", "Vista", "w26", 16)}${this.btn("edit", "Editar", "w26", 16)}${this.btn("dots", "Más", "w26", 14)}</div>
    </aside>`;
  }

  private rail() {
    const b = (n: string, cls = "", badge = "") =>
      html`<button aria-label=${n}><span class="in ${cls}">${icon(n)}</span>${badge ? html`<span class="badge">${badge}</span>` : nothing}</button>`;
    return html`<aside class="rail">
      ${b("list", "on")}${b("clock", "", "33")}${b("layers")}${b("chat")}<span class="grow"></span>
      ${b("radar")}${b("pyramid")}${b("calendar")}${b("feed", "", "99+")}${b("bell")}${b("apps", "white")}<hr />${b("help")}
    </aside>`;
  }

  private taskbar() {
    return html`<footer class="taskbar">
      <div class="weather">
        <svg width="19" height="18" viewBox="0 0 19 18"><circle cx="8" cy="7" r="5" fill="#e2a04a"/><path d="M5 16a4 4 0 0 1 0-8 5 5 0 0 1 9 1 3.500 3.500 0 0 1 0 7z" fill="#c3d6f2"/></svg>
        <span class="badge">2</span><span>23°C<br />Mayorm. nublado</span>
      </div>
      <div class="mid">
        <button class="start" aria-label="Inicio"><svg width="16" height="16" viewBox="0 0 16 16"><path d="M0 0h7.500v7.500H0zM8.500 0H16v7.500H8.500zM0 8.500h7.500V16H0zM8.500 8.500H16V16H8.500z" fill="#42bdf0"/></svg></button>
        <label class="find">${icon("search")}<input placeholder="Buscar" aria-label="Buscar" />
          <svg width="34" height="18" viewBox="0 0 34 18"><path d="M1 13C5 4 12 1 19 2s12 5 14 12c-6 5-26 5-32-1z" fill="#1b2b6b"/><path d="M5 8C10 1 20 0 26 5l-9 3z" fill="#2f9b8c"/><path d="M12 11l5-6 5 3 6 5-9 1z" fill="#d9c8d8"/><path d="M2 13c6-4 10 1 16 0s9-3 14 1c-8 4-24 4-30-1z" fill="#3b46c8"/></svg>
        </label>
        <div class="apps">
          ${apps.map(
            (a) => html`<button class=${classMap({ on: !!a.on, run: a.badge === " " })} aria-label=${a.name}><svg width="17" height="17" viewBox="0 0 18 18">${a.art}</svg>${a.badge ? html`<span class="badge ${a.badge === " " ? "rec" : ""}">${a.badge}</span>` : nothing}</button>`,
          )}
        </div>
      </div>
      <div class="tray">
        ${icon("up", 12)}
        <svg width="18" height="12" viewBox="0 0 18 12"><path d="M5 10a3.500 3.500 0 0 1 0-7 4.500 4.500 0 0 1 8 1 3 3 0 0 1 0 6z" fill="#d8d8d8"/></svg>
        <span class="mic">${icon("mic", 15)}</span><span class="lang">ESP<br />LAA</span>${icon("wifi", 13)}${icon("speaker", 13)}
        <svg class="battery" width="15" height="10" viewBox="0 0 15 10"><rect x=".5" y="1" width="12" height="8" rx="2" fill="#e8b93c" stroke="#ccc"/><path d="M13.500 3.500v3" stroke="#ccc"/></svg>
        <span class="date">23:05<br />19/01/2026</span>
      </div>
    </footer>`;
  }

  render() {
    return html`${this.tabBar()}${this.topBar()}
      <div class="main">
        ${this.tools()}
        <main class="center">${this.chart()}${this.below()}</main>
        ${this.watch()}${this.rail()}
      </div>
      ${this.taskbar()}`;
  }
}
